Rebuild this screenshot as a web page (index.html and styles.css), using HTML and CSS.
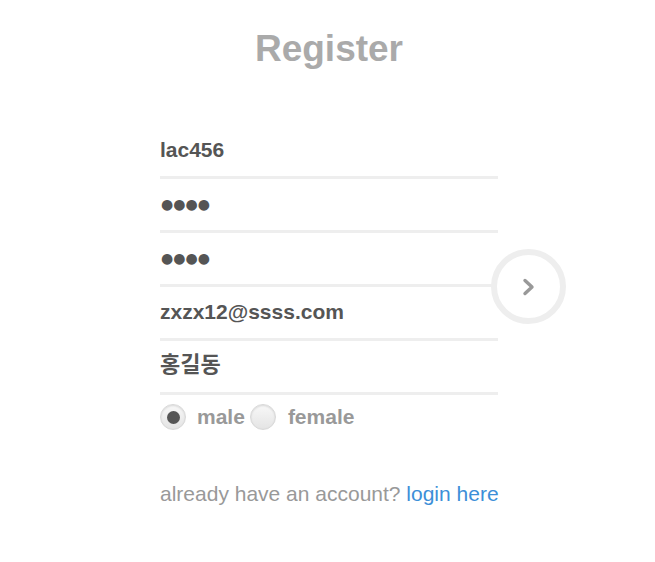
FILE: index.html
```html
<!DOCTYPE html>
<html>
<head>
<meta charset="utf-8">
<link rel="stylesheet" href="styles.css">
</head>
<body>
<div class="wrap">
  <h1 class="title">Register</h1>
  <form class="form">
    <div class="field"><input class="input" type="text" value="lac456"></div>
    <div class="field"><input class="input pw" type="text" value="●●●●" aria-label="password"></div>
    <div class="field"><input class="input pw" type="text" value="●●●●" aria-label="confirm password"></div>
    <div class="field"><input class="input" type="text" value="zxzx12@ssss.com"></div>
    <div class="field"><input class="input ko" type="text" value="홍길동"></div>
    <div class="gender">
      <span class="radio checked"><span class="dot"></span></span>
      <span class="label label-male">male</span>
      <span class="radio"></span>
      <span class="label label-female">female</span>
    </div>
    <button class="go" type="button" aria-label="next">
      <svg width="14" height="18" viewBox="0 0 14 18"><path d="M3 2.5 L10 9 L3 15.5" fill="none" stroke="#999" stroke-width="3.4" stroke-linecap="round" stroke-linejoin="round"/></svg>
    </button>
  </form>
  <p class="footer">already have an account? <a class="link" href="#">login here</a></p>
</div>
</body>
</html>
```
FILE: styles.css
```css
html, body {
  margin: 0;
  padding: 0;
  background: #fff;
}
body {
  font-family: "Liberation Sans", Arial, "Noto Sans CJK KR", sans-serif;
}
.wrap {
  width: 338px;
  margin-left: 160px;
}
.title {
  margin: 25px 0 0;
  font-size: 37px;
  line-height: 48px;
  font-weight: bold;
  color: #aaaaaa;
  text-align: center;
}
.form {
  position: relative;
  margin-top: 52px;
}
.field {
  border-bottom: 3px solid #eeeeee;
}
.input {
  display: block;
  width: 100%;
  box-sizing: border-box;
  border: none;
  outline: none;
  padding: 13px 0 14px;
  margin: 0;
  height: 51px;
  font-family: "Liberation Sans", Arial, "Noto Sans CJK KR", sans-serif;
  font-size: 21px;
  line-height: 24px;
  font-weight: bold;
  color: #555555;
  background: transparent;
}
.pw {
  font-family: "DejaVu Sans", sans-serif;
  font-size: 14px;
  padding: 13px 0 14px 1px;
}
.ko {
  font-size: 22px;
  padding: 9px 0 18px;
}
.gender {
  display: flex;
  align-items: center;
  padding-top: 9px;
  height: 26px;
}
.radio {
  width: 26px;
  height: 26px;
  box-sizing: border-box;
  border-radius: 50%;
  border: 1px solid #d8d8d8;
  background: linear-gradient(#f8f8f8, #e4e4e4);
  box-shadow: inset 0 1px 2px rgba(0,0,0,0.12);
  display: flex;
  align-items: center;
  justify-content: center;
  flex: none;
}
.dot {
  width: 13px;
  height: 13px;
  border-radius: 50%;
  background: #555555;
}
.label {
  font-size: 21px;
  font-weight: bold;
  color: #999999;
}
.label-male {
  margin: 0 5px 0 11px;
}
.label-female {
  margin-left: 12px;
}
.go {
  position: absolute;
  left: 331px;
  top: 124px;
  width: 75px;
  height: 75px;
  box-sizing: border-box;
  border-radius: 50%;
  border: 6px solid #eeeeee;
  background: #fff;
  padding: 0;
  display: flex;
  align-items: center;
  justify-content: center;
  cursor: pointer;
}
.go svg {
  display: block;
}
.footer {
  margin: 52px 0 0;
  font-size: 21px;
  line-height: 24px;
  color: #999999;
  white-space: nowrap;
}
.link {
  color: #3c8fd8;
  text-decoration: none;
}
```
